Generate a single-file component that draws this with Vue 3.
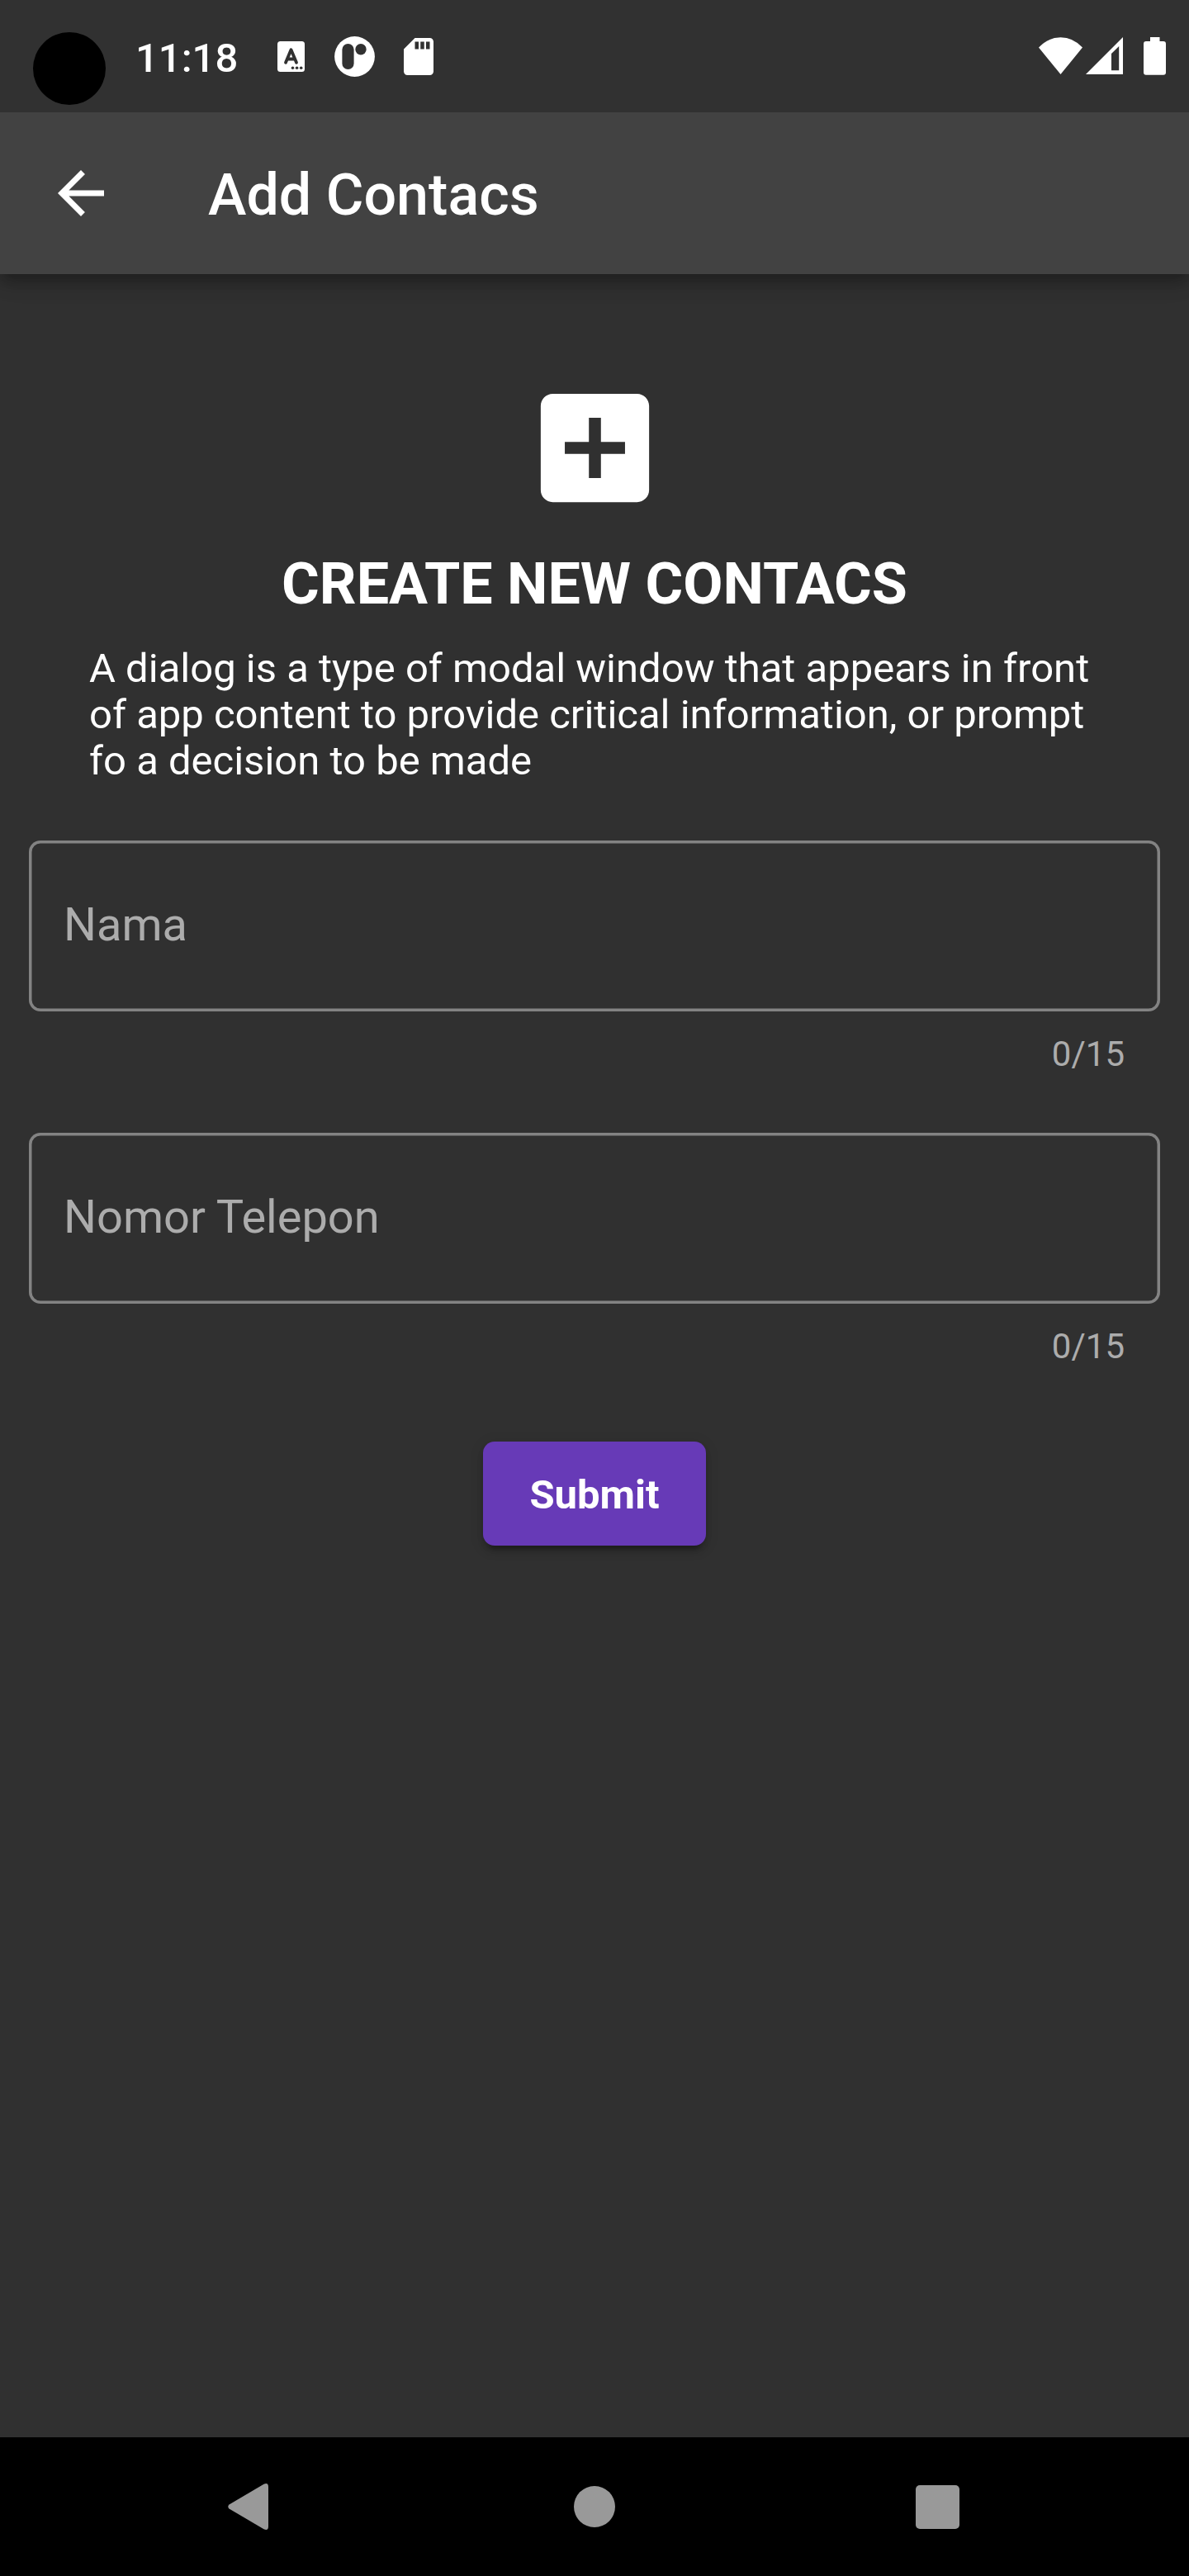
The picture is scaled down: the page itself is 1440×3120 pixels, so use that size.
<script setup>
const fields = [
  { label: 'Nama', count: '0/15' },
  { label: 'Nomor Telepon', count: '0/15' },
]
</script>

<template>
  <div class="screen">
    <header class="status">
      <div class="status-left">
        <span class="camera"></span>
        <span class="clock">11:18</span>
        <svg class="ic-letter" width="33" height="37" viewBox="0 0 33 37">
          <rect width="33" height="37" rx="3.5" fill="#fff" />
          <path d="M10 25.8 16.5 10.3 23 25.8M12.5 21.5H20.5" fill="none" stroke="#313131" stroke-width="3.8" stroke-linecap="round" stroke-linejoin="round" />
          <circle cx="18.5" cy="32.2" r="1.8" fill="#313131" />
          <circle cx="23.6" cy="32.2" r="1.8" fill="#313131" />
          <circle cx="28.7" cy="32.2" r="1.8" fill="#313131" />
        </svg>
        <svg class="ic-round" width="49" height="49" viewBox="0 0 49 49">
          <circle cx="24.5" cy="24.5" r="24.4" fill="#fff" />
          <rect x="9.4" y="9" width="14.2" height="31" rx="7.1" fill="#313131" />
          <circle cx="32" cy="15.8" r="6.7" fill="#313131" />
        </svg>
        <svg class="ic-sd" width="36" height="45" viewBox="4 2 16 20">
          <path fill="#fff" d="M18 2h-8L4.02 8 4 20c0 1.1.9 2 2 2h12c1.1 0 2-.9 2-2V4c0-1.1-.9-2-2-2zm-6 6h-2V4h2v4zm3 0h-2V4h2v4zm3 0h-2V4h2v4z" />
        </svg>
      </div>
      <div class="status-right">
        <svg width="53" height="46" viewBox="0 0 53 46">
          <path fill="#fff" d="M26.5 45 0 12.5Q11.5 0.3 26.5 0.3T53 12.5Z" />
        </svg>
        <svg class="ic-signal" width="45" height="46" viewBox="0 0 45 46">
          <path fill="#fff" fill-rule="evenodd" d="M0 45 45 0V45ZM31 20V40.3H40.2V11Z" />
        </svg>
        <svg class="ic-battery" width="27" height="46" viewBox="0 0 27 46">
          <path fill="#fff" d="M8 0H19.5V5H24Q27 5 27 8V42.7Q27 45.7 24 45.7H3Q0 45.7 0 42.7V8Q0 5 3 5H8Z" />
        </svg>
      </div>
    </header>

    <div class="appbar">
      <svg width="84" height="84" viewBox="0 0 24 24">
        <path fill="#fff" d="M20 11H7.83l5.59-5.59L12 4l-8 8 8 8 1.41-1.41L7.83 13H20v-2z" />
      </svg>
      <span class="title">Add Contacs</span>
    </div>

    <main class="body">
      <svg class="add" width="175" height="175" viewBox="0 0 24 24">
        <path fill="#fff" d="M19 3H5c-1.11 0-2 .9-2 2v14c0 1.1.89 2 2 2h14c1.1 0 2-.9 2-2V5c0-1.1-.9-2-2-2zm-2 10h-4v4h-2v-4H7v-2h4V7h2v4h4v2z" />
      </svg>
      <h1 class="heading">CREATE NEW CONTACS</h1>
      <p class="desc">A dialog is a type of modal window that appears in front<br />of app content to provide critical information, or prompt<br />fo a decision to be made</p>

      <div v-for="f in fields" :key="f.label" class="field">
        <div class="box">{{ f.label }}</div>
        <div class="count">{{ f.count }}</div>
      </div>

      <button class="submit">Submit</button>
    </main>

    <nav class="nav">
      <svg class="nav-back" width="49" height="56" viewBox="0 0 49 56">
        <path fill="#999" d="M1.5 25.5 43.5 .8Q49-1.500 49 4V52Q49 57.500 43.5 55.200L1.5 30.5Q-1 28 1.5 25.5Z" />
      </svg>
      <span class="nav-home"></span>
      <span class="nav-recent"></span>
    </nav>
  </div>
</template>

<style>
body {
  margin: 0;
  background: #303030;
}
</style>

<style scoped>
.screen {
  width: 1440px;
  height: 3120px;
  display: flex;
  flex-direction: column;
  background: #303030;
  color: #fff;
  font-family: Roboto, "Liberation Sans", sans-serif;
  overflow: hidden;
}
svg {
  display: block;
  flex: none;
}
.status {
  height: 136px;
  flex: none;
  display: flex;
  justify-content: space-between;
  align-items: flex-start;
  background: #313131;
}
.status-left,
.status-right {
  display: flex;
  align-items: flex-start;
}
.camera {
  width: 88px;
  height: 88px;
  margin: 39px 0 0 40px;
  border-radius: 50%;
  background: #000;
}
.clock {
  width: 172px;
  margin: 42px 0 0 36px;
  font-size: 49px;
  line-height: 57px;
  font-weight: 500;
  white-space: nowrap;
}
.ic-letter {
  margin-top: 50px;
}
.ic-round {
  margin: 44px 0 0 36px;
}
.ic-sd {
  margin: 46px 0 0 34.5px;
}
.status-right {
  padding: 45px 28px 0 0;
}
.ic-signal {
  margin-left: 4px;
}
.ic-battery {
  margin-left: 25px;
}
.appbar {
  height: 196px;
  flex: none;
  display: flex;
  align-items: center;
  padding-left: 56px;
  background: #424242;
  box-shadow: 0 7px 14px -3.5px rgba(0, 0, 0, 0.2), 0 14px 17.5px rgba(0, 0, 0, 0.14), 0 3.5px 35px rgba(0, 0, 0, 0.12);
  clip-path: inset(0 0 -70px 0);
}
.title {
  margin-left: 112px;
  padding-top: 4px;
  font-size: 70px;
  line-height: 82px;
  font-weight: 500;
}
.body {
  flex: 1;
  display: flex;
  flex-direction: column;
  align-items: center;
}
.add {
  margin-top: 122.5px;
}
.heading {
  margin: 36.5px 0 0;
  font-size: 70px;
  line-height: 82px;
  font-weight: 700;
  white-space: nowrap;
}
.desc {
  margin: 33.5px 0 0 108px;
  align-self: flex-start;
  font-size: 49px;
  line-height: 56px;
  white-space: nowrap;
}
.field {
  width: 1370px;
  height: 353.5px;
}
.desc + .field {
  margin-top: 68.5px;
}
.box {
  box-sizing: border-box;
  height: 207px;
  padding-left: 42px;
  border-radius: 14px;
  box-shadow: inset 0 0 0 3.5px #838383;
  font-size: 56px;
  line-height: 204px;
  color: #acacac;
}
.count {
  margin-top: 27px;
  padding-right: 43px;
  text-align: right;
  font-size: 42px;
  line-height: 49px;
  color: #acacac;
}
.submit {
  width: 270px;
  height: 126px;
  margin-top: 21px;
  padding: 3px 0 0;
  border: 0;
  border-radius: 14px;
  background: #673ab7;
  color: #fff;
  font: 700 49px/123px Roboto, "Liberation Sans", sans-serif;
  box-shadow: 0 10.5px 3.5px -7px rgba(0, 0, 0, 0.2), 0 7px 7px rgba(0, 0, 0, 0.14), 0 3.5px 17.5px rgba(0, 0, 0, 0.12);
}
.nav {
  height: 168px;
  flex: none;
  display: flex;
  align-items: center;
  background: #000;
}
.nav-back {
  margin-left: 276px;
}
.nav-home {
  width: 50px;
  height: 50px;
  margin-left: 370px;
  border-radius: 50%;
  background: #999;
}
.nav-recent {
  width: 53px;
  height: 53px;
  margin-left: 364px;
  border-radius: 5px;
  background: #999;
}
</style>
